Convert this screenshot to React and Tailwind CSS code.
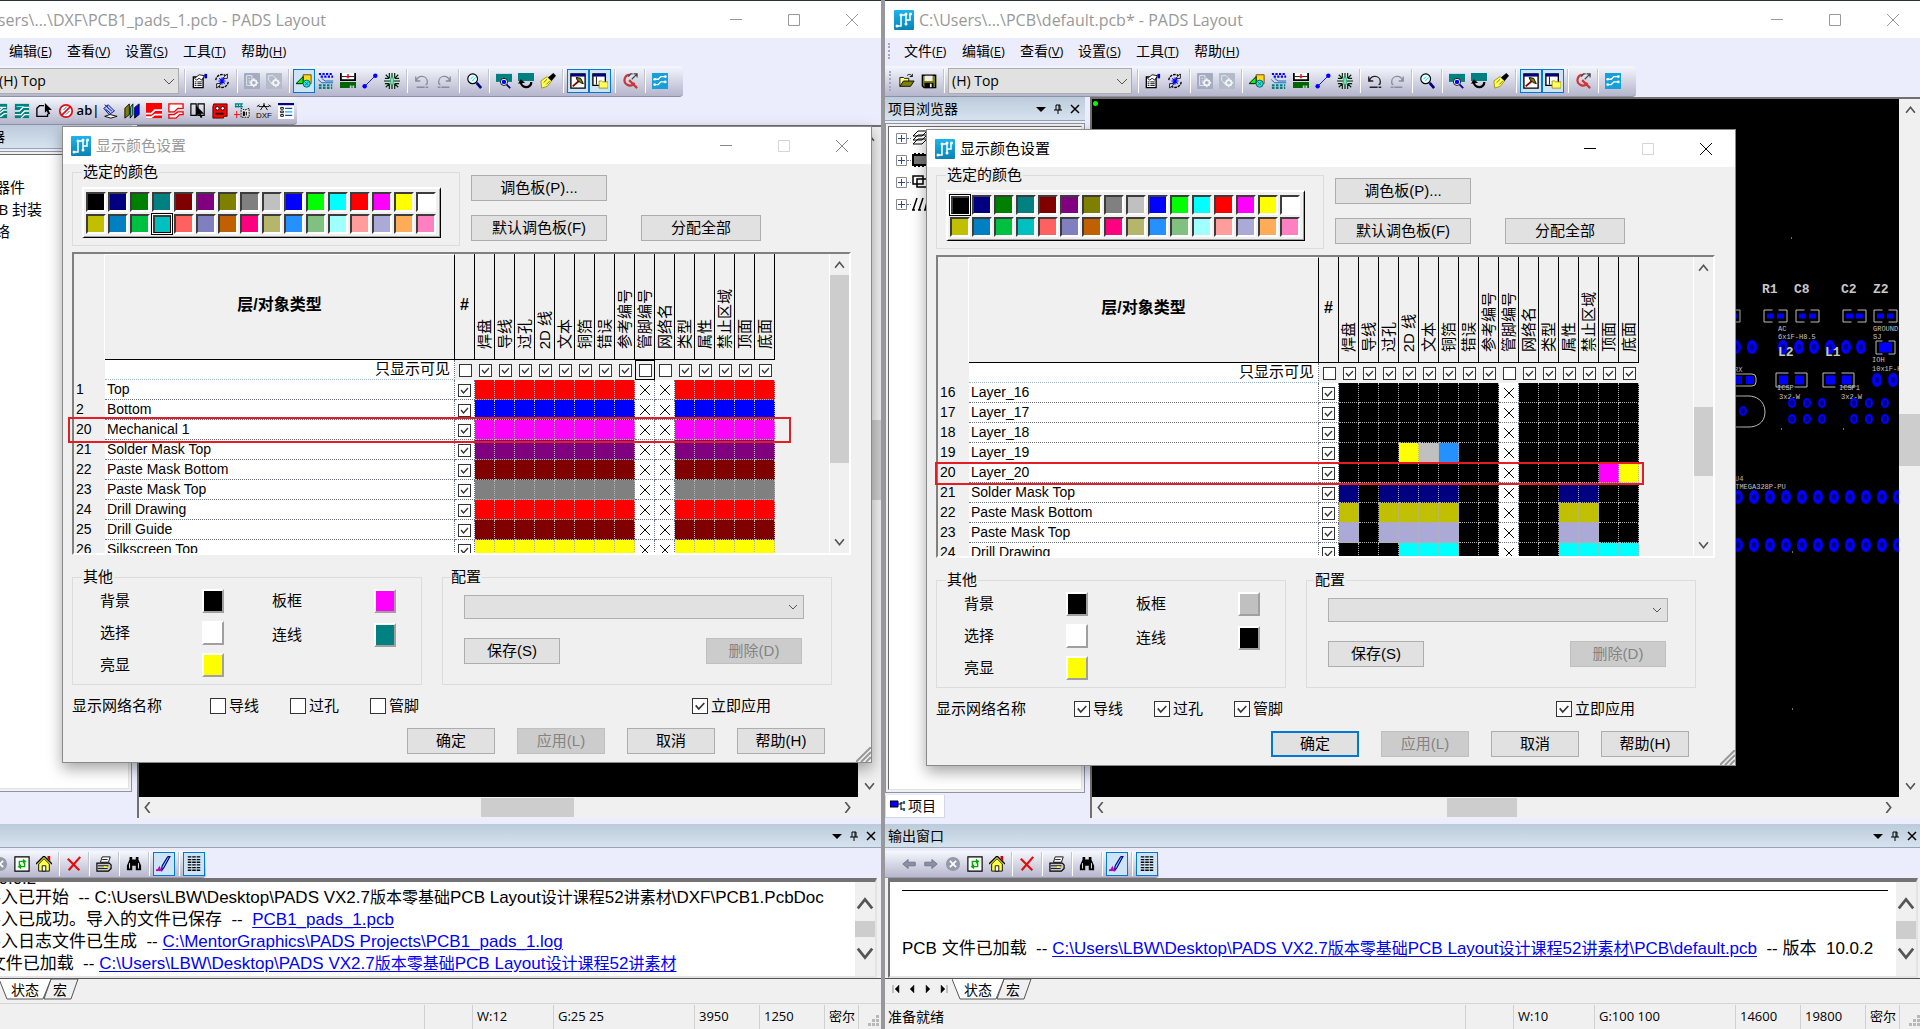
import { Fragment } from 'react'
import clsx from 'clsx'

const PALETTE = [
  ['#000000', '#000080', '#008000', '#008080', '#800000', '#800080', '#808000', '#808080', '#c0c0c0', '#0000ff', '#00ff00', '#00ffff', '#ff0000', '#ff00ff', '#ffff00', '#ffffff'],
  ['#c0c000', '#0080c0', '#00c040', '#00c0c0', '#ff6060', '#8080c0', '#c06000', '#ff0080', '#b5b56b', '#2590ff', '#80c080', '#a0ffff', '#ff9c9c', '#aba9d5', '#ffac59', '#ff80c0'],
]

const COLUMNS = ['焊盘', '导线', '过孔', '2D 线', '文本', '铜箔', '错误', '参考编号', '管脚编号', '网络名', '类型', '属性', '禁止区域', '顶面', '底面']

// one letter per object column, x = no colour for that object
const COLORS = {
  k: '#000000',
  r: '#ff0000',
  b: '#0000ff',
  m: '#ff00ff',
  p: '#800080',
  d: '#800000',
  g: '#808080',
  y: '#ffff00',
  s: '#c0c0c0',
  l: '#2590ff',
  n: '#000080',
  o: '#c0c000',
  v: '#aba9d5',
  c: '#00ffff',
}

const LEFT_ROWS = [
  ['1', 'Top', 'rrrrrrrrxxrrrrr'],
  ['2', 'Bottom', 'bbbbbbbbxxbbbbb'],
  ['20', 'Mechanical 1', 'mmmmmmmmxxmmmmm'],
  ['21', 'Solder Mask Top', 'ppppppppxxppppp'],
  ['22', 'Paste Mask Bottom', 'ddddddddxxddddd'],
  ['23', 'Paste Mask Top', 'ggggggggxxggggg'],
  ['24', 'Drill Drawing', 'rrrrrrrrxxrrrrr'],
  ['25', 'Drill Guide', 'ddddddddxxddddd'],
  ['26', 'Silkscreen Top', 'yyyyyyyyxxyyyyy'],
]

const RIGHT_ROWS = [
  ['16', 'Layer_16', 'kkkkkkkkxkkkkkk'],
  ['17', 'Layer_17', 'kkkkkkkkxkkkkkk'],
  ['18', 'Layer_18', 'kkkkkkkkxkkkkkk'],
  ['19', 'Layer_19', 'kkkyslkkxkkkkkk'],
  ['20', 'Layer_20', 'kkkkkkkkxkkkkmy'],
  ['21', 'Solder Mask Top', 'nknnnnkkxkknnkk'],
  ['22', 'Paste Mask Bottom', 'okooookkxkkookk'],
  ['23', 'Paste Mask Top', 'vkvvvvkkxkkvvkk'],
  ['24', 'Drill Drawing', 'kkkccckkxkkcccc'],
]

const ICONS = {
  open: (
    <>
      <path d="M1 15V5h4l1 1h5v3" fill="#ffff80" stroke="#000" />
      <path d="M1 15L5 9h12l-4 6z" fill="#808000" stroke="#000" />
      <path d="M9 3c2-2 4-2 6 1M15 1v3h-3" fill="none" stroke="#000" />
    </>
  ),
  save: (
    <>
      <path d="M1.500 2.500h15v14h-13l-2-2z" fill="#808000" stroke="#000" strokeWidth="1.500" />
      <rect x="4" y="3" width="9" height="6" fill="#eee" />
      <rect x="4" y="11" width="10" height="6" fill="#000" />
      <rect x="10" y="12" width="2" height="4" fill="#eee" />
    </>
  ),
  props: (
    <>
      <path d="M1.500 4.500h11v12h-11z" fill="#fff" stroke="#000" strokeWidth="1.500" />
      <path d="M3 10h2M6 10h5M3 12h2M6 12h5M3 14h2M6 14h5" stroke="#000" />
      <path d="M3 6l5-4 6 1-3 5-3-2-3 2z" fill="#fff" stroke="#000" />
      <path d="M14 1h3v5h-3z" fill="#0000c0" />
    </>
  ),
  cycle: (
    <>
      <path d="M2 8a7 7 0 0 1 11-5M16 10a7 7 0 0 1-11 5" fill="none" stroke="#000" strokeWidth="1.500" strokeDasharray="3 1" />
      <path d="M15 1v5h-5zM3 17v-5h5z" fill="#fff" stroke="#000" />
      <path d="M9 5v8M5 9h8M6 6l6 6M12 6l-6 6" stroke="#00f" strokeWidth="1.300" />
    </>
  ),
  gearDoc: (
    <>
      <rect x="0" y="0" width="18" height="18" rx="1" fill="#a4adc0" />
      <path d="M3 3h6v11H3zM5 6h2M5 9h2" fill="none" stroke="#e8ecf4" />
      <path d="M11 6v10M6 11h10M8 8l6 6M14 8l-6 6" stroke="#f2f4fa" strokeWidth="1.500" />
      <circle cx="11" cy="11" r="3" fill="none" stroke="#f2f4fa" strokeWidth="2" />
      <circle cx="11" cy="11" r="2" fill="#a4adc0" />
    </>
  ),
  gearTag: (
    <>
      <rect x="0" y="0" width="18" height="18" rx="1" fill="#b3bac8" />
      <path d="M3 3h5l3 3-4 7-4-5z" fill="none" stroke="#e8ecf4" />
      <path d="M11 6v10M6 11h10M8 8l6 6M14 8l-6 6" stroke="#f2f4fa" strokeWidth="1.500" />
      <circle cx="11" cy="11" r="3" fill="none" stroke="#f2f4fa" strokeWidth="2" />
      <circle cx="11" cy="11" r="2" fill="#b3bac8" />
    </>
  ),
  shapes: (
    <>
      <path d="M8 2h9v10H8z" fill="#ffd820" stroke="#604000" />
      <path d="M0 12l8-8v8z" fill="#0f0" stroke="#000" />
      <circle cx="12" cy="12" r="4" fill="#2ce0e0" stroke="#006060" />
      <path d="M10 10l4 4M14 10l-4 4" stroke="#008080" />
    </>
  ),
  dots: (
    <>
      <path d="M1 1h16M3 4h14" stroke="#00f" strokeWidth="2.500" strokeDasharray="2.500 1.500" />
      <path d="M0 7l4 4h13M4 6l4 3h9" fill="none" stroke="#0060c0" />
      <path d="M1 14h15M1 17h15" stroke="#008080" strokeWidth="2.500" strokeDasharray="3 1.500" />
    </>
  ),
  ruler: (
    <>
      <path d="M1 0v8h16V0" fill="#fff" stroke="#000" strokeWidth="2" />
      <path d="M2 4h14" stroke="#000" />
      <path d="M9 1v5M7 4h4" stroke="#d00" strokeWidth="1.500" />
      <path d="M0 10h18v7h-2v-3h-2v3h-1v-3h-2v3H0z" fill="#006400" />
    </>
  ),
  route: (
    <>
      <path d="M3 15L15 3" stroke="#00f" />
      <circle cx="3" cy="15" r="2.500" fill="#00f" />
      <circle cx="15" cy="3" r="2.500" fill="#00f" />
    </>
  ),
  burst: (
    <>
      <path d="M9 0v18M6 0v6M12 0v6M6 12v6M12 12v6M0 9h18M1 6h5M1 12h5M12 6h5M12 12h5M2 2l4 4M16 2l-4 4M2 16l4-4M16 16l-4-4" stroke="#002800" strokeWidth="1.300" />
      <rect x="7" y="5" width="4" height="8" fill="#20c080" />
      <path d="M9 6v6" stroke="#fff" />
    </>
  ),
  undo: <path d="M3 9c0-7 12-7 12 1 0 2-1 3-2 3M2 4v5h5M3 16h9M13 16h3" fill="none" stroke="#888d99" strokeWidth="1.500" />,
  undoOn: <path d="M3 9c0-7 12-7 12 1 0 2-1 3-2 3M2 4v5h5M3 16h9M13 16h3" fill="none" stroke="#222" strokeWidth="1.500" />,
  redo: <path d="M15 9c0-7-12-7-12 1 0 2 1 3 2 3M16 4v5h-5M2 16h3M6 16h9" fill="none" stroke="#888d99" strokeWidth="1.500" />,
  zoom: (
    <>
      <circle cx="7.500" cy="6.500" r="5.500" fill="#e8ffff" stroke="#000" strokeWidth="1.300" />
      <path d="M5 7l3-3M7 9l4-4" stroke="#00c8e0" />
      <path d="M12 11l5 6" stroke="#000080" strokeWidth="3" />
    </>
  ),
  boardZoom: (
    <>
      <path d="M0 1h18v9H0z" fill="#008080" />
      <circle cx="9" cy="10" r="4" fill="#fff" stroke="#000" />
      <circle cx="9" cy="10" r="2.500" fill="#00f" />
      <path d="M12 13l4 4" stroke="#000080" strokeWidth="2" />
    </>
  ),
  boardRedraw: (
    <>
      <path d="M0 0h18v9H0z" fill="#008080" />
      <path d="M3 9c0 9 12 9 12 1" fill="none" stroke="#000" strokeWidth="2.500" />
      <path d="M0 12l3-5 5 4z" fill="#000" />
    </>
  ),
  brush: (
    <>
      <path d="M1 9l7-5 5 5-5 6-6 2z" fill="#ffff60" stroke="#a09000" />
      <path d="M9 5l6-5 3 3-5 6z" fill="#000" />
      <path d="M4 11l4-4M7 13l4-4" stroke="#806000" />
    </>
  ),
  hammer: (
    <>
      <path d="M1 1h16v16H1z" fill="#fff" stroke="#000" strokeWidth="1.500" />
      <path d="M1 1h16v3H1z" fill="#000080" />
      <path d="M3 15l7-6" stroke="#800000" strokeWidth="2" />
      <path d="M7 5l5 1 3 6-3-1-4-3z" fill="#808000" stroke="#000" />
    </>
  ),
  panes: (
    <>
      <path d="M1 1h14v13H1z" fill="#fff" stroke="#000" strokeWidth="1.500" />
      <path d="M1 1h14v3H1z" fill="#000080" />
      <path d="M5 4v9" stroke="#000" />
      <path d="M8 9h3l1 1h6v7H8z" fill="#ffff60" stroke="#a09000" />
    </>
  ),
  query: (
    <>
      <path d="M9 2a6 6 0 1 0 5 9M8 8l9 9" fill="none" stroke="#c8383c" strokeWidth="2.500" />
      <path d="M11 7l6-6M13 1h4v4M9 1h3M7 4l3-3" fill="none" stroke="#444" strokeWidth="1.300" />
    </>
  ),
  waves: (
    <>
      <rect x="0" y="0" width="18" height="18" fill="#159fdb" />
      <path d="M3 7h4l3-3h5M3 13h4l3-3h5" fill="none" stroke="#fff" strokeWidth="1.500" />
      <circle cx="3" cy="7" r="1.500" fill="#fff" />
      <circle cx="15" cy="4" r="1.500" fill="#fff" />
      <circle cx="3" cy="13" r="1.500" fill="#fff" />
      <circle cx="15" cy="10" r="1.500" fill="#fff" />
    </>
  ),
  copper: (
    <>
      <rect x="1" y="1" width="16" height="16" fill="#008080" />
      <path d="M1 5h15M3 8h6l3-3M1 11h8l4-3h4M1 15h9l4-3h3" fill="none" stroke="#fff" strokeWidth="1.500" />
    </>
  ),
  copper2: (
    <>
      <rect x="1" y="1" width="16" height="16" fill="#008080" />
      <path d="M1 9h5l4-4h7M1 13h7l4-4h5M8 17l4-4h5" fill="none" stroke="#fff" strokeWidth="1.500" />
      <path d="M3 4h8" stroke="#80ffff" />
    </>
  ),
  addShape: (
    <>
      <path d="M9 3H4L1 6v9h12v-3" fill="none" stroke="#000" strokeWidth="1.500" />
      <path d="M10 0l8 8h-4l2 4-2 1-2-4-2 2z" fill="#000" />
    </>
  ),
  keepout: (
    <>
      <circle cx="9" cy="9" r="7" fill="#fff" stroke="#e01010" strokeWidth="2" />
      <path d="M4 14L14 4" stroke="#e01010" strokeWidth="2" />
      <path d="M6 8l4-4M9 13l4-4" stroke="#24c" />
    </>
  ),
  pour: (
    <>
      <path d="M2 6l5-4 7 7-6 4z" fill="#b0c8ff" stroke="#000080" />
      <path d="M4 7l5 4M6 5l5 4M3 2l4 3" stroke="#000080" />
      <path d="M3 15l6-2 8 2-7 2z" fill="#fff" stroke="#000" />
    </>
  ),
  books: (
    <>
      <path d="M1 6l5-5v12l-5 4z" fill="#808000" stroke="#000" />
      <path d="M7 5l3-4v12l-3 4z" fill="#20d0d0" stroke="#000" />
      <path d="M12 5l5-4v12l-5 4z" fill="#00f" stroke="#000" />
    </>
  ),
  plane: (
    <>
      <rect x="0" y="0" width="18" height="17" fill="#f00" />
      <path d="M0 12h6l4-4h8M0 16h6l4-3h8" fill="none" stroke="#fff" strokeWidth="2" />
    </>
  ),
  planeCut: (
    <>
      <path d="M1 1h16v5h-6l-4 4H1zM1 17v-4h6l4-3h6v3h-4l-4 4z" fill="#fff" stroke="#f00" strokeWidth="1.500" />
    </>
  ),
  select: (
    <>
      <path d="M1 1h6v13H1zM9 1h7v13H9z" fill="none" stroke="#000" strokeWidth="1.300" />
      <path d="M7 3v12l3-3 2 5 2-1-2-4h4z" fill="#000" />
    </>
  ),
  redPart: (
    <>
      <path d="M2 1h15v14h-4v2H1V4z" fill="#f00" stroke="#400" />
      <circle cx="6" cy="6" r="2" fill="#fff" stroke="#000" />
      <circle cx="12" cy="6" r="2" fill="#fff" stroke="#000" />
      <path d="M4 12h9" stroke="#000" strokeWidth="2" />
    </>
  ),
  clipPart: (
    <>
      <path d="M1 1h9M1 4h9M2 1v4M5 1v4M8 1v4" stroke="#008080" strokeWidth="1.500" />
      <path d="M0 13h7M3 9v8" stroke="#f00" />
      <path d="M8 16V6l4 2 5-2v10z" fill="#e8e8e8" stroke="#000" strokeDasharray="2 1" />
      <path d="M10 10h2v4h-2M14 10v4" stroke="#000" />
    </>
  ),
  dxf: (
    <>
      <path d="M9 0v3M3 4h12M5 8l4-6 4 6M1 4l3-2M17 4l-3-2" fill="none" stroke="#000" />
      <text x="9" y="17" textAnchor="middle" fontSize="9" fontFamily="Liberation Sans">DXF</text>
    </>
  ),
  list: (
    <>
      <rect x="0" y="0" width="18" height="18" fill="#fff" />
      <path d="M0 1h18" stroke="#000080" strokeWidth="3" />
      <path d="M3 5h3v2H3zM3 9h3v2H3zM3 13h3v2H3z" fill="none" stroke="#000" />
      <path d="M8 6h8M8 14h8" stroke="#24c" strokeWidth="1.500" />
      <path d="M8 10h8" stroke="#0cc" strokeWidth="1.500" />
    </>
  ),
  back: <path d="M2 9l6-5v3h8v4H8v3z" fill="#8b90a2" stroke="#6f7488" />,
  forward: <path d="M16 9l-6-5v3H2v4h8v3z" fill="#8b90a2" stroke="#6f7488" />,
  stop: (
    <>
      <circle cx="9" cy="9" r="8" fill="#959aa8" />
      <path d="M5.500 5.500l7 7M12.500 5.500l-7 7" stroke="#fff" strokeWidth="2" />
    </>
  ),
  reload: (
    <>
      <path d="M1 1h16v16H1z" fill="#fff" stroke="#000" strokeWidth="1.300" />
      <path d="M6 11V6h5M12 7v5H7" fill="none" stroke="#00b000" strokeWidth="1.500" />
      <path d="M10 3l4 3-4 3zM8 9l-4 3 4 3z" fill="#00b000" />
    </>
  ),
  home: (
    <>
      <path d="M0 9l9-9 9 9" fill="#ffff40" stroke="#000" strokeWidth="1.500" />
      <path d="M3 9v8h12V9L9 3z" fill="#ffff40" stroke="#000" />
      <path d="M13 0h3v6l-3-3z" fill="#c00" />
      <path d="M7 17v-6h4v6z" fill="#fff" stroke="#000" />
    </>
  ),
  cross: <path d="M2 3l13 13M16 1L3 16" stroke="#e01010" strokeWidth="2.500" />,
  print: (
    <>
      <path d="M5 7l2-6h9l-2 6z" fill="#fff" stroke="#000" />
      <path d="M1 8h14l2 2v4l-3 3H1z" fill="#c8c8c8" stroke="#000" strokeWidth="1.300" />
      <path d="M7 4h6M2 11h12M2 14h11" stroke="#000" />
      <path d="M9 12.500h3" stroke="#ff0" strokeWidth="2" />
    </>
  ),
  find: (
    <>
      <path d="M4 1h3v3h4V1h3v3l3 7v5h-6v-5H7v5H1v-5l3-7z" fill="#000" />
      <path d="M4 8v6M14 8v6" stroke="#fff" />
    </>
  ),
  pen: (
    <>
      <path d="M16 0L9 13l-3 4 1-6 6-10z" fill="#7ac8ff" stroke="#000080" strokeWidth="1.300" />
      <path d="M1 16l3-5 2 5z" fill="#c000c0" />
      <path d="M0 16h7" stroke="#c000c0" strokeWidth="2" />
    </>
  ),
  grid: <path d="M2 1h14M2 4h14M2 7h14M2 10h14M2 13h14M2 16h14" stroke="#000" strokeWidth="1.500" strokeDasharray="4 1" />,
}

const MAIN_TOOLS = ['props', 'cycle', '|', 'gearDoc', 'gearTag', '|', 'shapes*', 'dots', 'ruler', 'route', 'burst', '|', 'undo', 'redo', '|', 'zoom', '|', 'boardZoom', 'boardRedraw', 'brush', '|', 'hammer*', 'panes*', '|', 'query', '|', 'waves']
const RIGHT_TOOLS = MAIN_TOOLS.map((t) => (t === 'shapes*' ? 'shapes' : t === 'undo' ? 'undoOn' : t))
const DRAFT_TOOLS = ['copper', 'copper2', 'addShape', 'keepout', 'ab', 'pour', 'books', 'plane', 'planeCut', 'select', 'redPart', 'clipPart', 'dxf', 'list']
const OUTPUT_TOOLS = ['back', 'forward', 'stop', 'reload', 'home', '|', 'cross', '|', 'print', '|', 'find', '|', 'pen*', '|', 'grid*']

function Tools({ names }) {
  return names.map((name, i) => {
    if (name === '|') {
      return <span key={i} className="mx-[3px] h-6 w-[2px] border-l border-[#c3c4d0] bg-white" />
    }
    const active = name.endsWith('*')
    const key = active ? name.slice(0, -1) : name
    return (
      <button
        key={i}
        aria-label={key}
        className={clsx(
          'flex h-6 w-[22px] shrink-0 items-center justify-center border',
          active ? 'border-[#0078d7] bg-[#cde4f7]' : 'border-transparent'
        )}
      >
        {key === 'ab' ? (
          <span className="text-[13px] font-semibold">ab|</span>
        ) : (
          <svg viewBox="0 0 18 18" className="size-4 shrink-0">{ICONS[key]}</svg>
        )}
      </button>
    )
  })
}

function Logo() {
  return (
    <svg viewBox="0 0 20 20" className="size-5 shrink-0">
      <defs>
        <linearGradient id="logo" x1="0" y1="0" x2="0" y2="1">
          <stop offset="0" stopColor="#1bb5ee" />
          <stop offset="1" stopColor="#0b81b3" />
        </linearGradient>
      </defs>
      <rect width="20" height="20" rx="1" fill="url(#logo)" />
      <path d="M3 16h4V5h4M12 14V4M12 10h4V5" fill="none" stroke="#fff" strokeWidth="1.500" />
      <circle cx="3" cy="16" r="1.500" fill="#fff" />
      <circle cx="12" cy="14" r="1.500" fill="#fff" />
      <circle cx="12" cy="4" r="1.500" fill="#fff" />
      <circle cx="16.500" cy="4" r="1.500" fill="#fff" />
      <circle cx="7" cy="5" r="1.500" fill="#fff" />
    </svg>
  )
}

function WindowButtons({ color, maxColor }) {
  return (
    <div className={clsx('ml-auto flex', color)}>
      <button aria-label="最小化" className="flex w-[58px] justify-center">
        <svg viewBox="0 0 12 12" className="size-3"><path d="M0 5.500h12" stroke="currentColor" /></svg>
      </button>
      <button aria-label="最大化" className={clsx('flex w-[58px] justify-center', maxColor)}>
        <svg viewBox="0 0 12 12" className="size-3"><path d="M.5.5h11v11H.5z" fill="none" stroke="currentColor" /></svg>
      </button>
      <button aria-label="关闭" className="flex w-[58px] justify-center">
        <svg viewBox="0 0 12 12" className="size-3"><path d="M0 0l12 12M12 0L0 12" stroke="currentColor" /></svg>
      </button>
    </div>
  )
}

function PanelHeader({ title }) {
  return (
    <div className="flex h-6 shrink-0 items-center border-b border-[#9aa3b0] bg-gradient-to-b from-[#bccbdb] to-[#d6e3ef] pl-[3px] text-sm">
      <span className="whitespace-nowrap">{title}</span>
      <span className="ml-auto flex items-center gap-[3px] pr-[3px]">
        <button aria-label="菜单" className="p-[2px]">
          <svg viewBox="0 0 10 10" className="size-[10px]"><path d="M0 3h10L5 8z" /></svg>
        </button>
        <button aria-label="固定" className="p-[2px]">
          <svg viewBox="0 0 10 10" className="size-[10px]"><path d="M3 6V1h4v5M6 1v5M1 6h8M5 6v4" fill="none" stroke="#000" /></svg>
        </button>
        <button aria-label="关闭面板" className="p-[2px]">
          <svg viewBox="0 0 10 10" className="size-[10px]"><path d="M1 1l8 8M9 1L1 9" stroke="#000" strokeWidth="1.500" /></svg>
        </button>
      </span>
    </div>
  )
}

function Arrow({ dir, big }) {
  const paths = { up: 'M1 8l4-5 4 5', down: 'M1 2l4 5 4-5', left: 'M7 0L3 5l4 5', right: 'M3 0l4 5-4 5' }
  return (
    <svg viewBox="0 0 10 10" className={clsx('shrink-0', big ? 'size-[18px]' : 'size-[11px]')}>
      <path d={paths[dir]} fill="none" stroke="#555" strokeWidth="1.500" />
    </svg>
  )
}

function VScroll({ className, thumb, before, after = 'grow', big }) {
  return (
    <div className={clsx('flex shrink-0 flex-col items-center bg-[#f0f0f0]', className)}>
      <span className="flex h-[21px] shrink-0 items-center"><Arrow dir="up" big={big} /></span>
      <span className={before} />
      <span className={clsx('w-full shrink-0 bg-[#cdcdcd]', thumb)} />
      <span className={after} />
      <span className="flex h-[21px] shrink-0 items-center"><Arrow dir="down" big={big} /></span>
    </div>
  )
}

function Check({ checked, big, label }) {
  const size = big ? 'size-4' : 'size-[13px]'
  return (
    <span className="inline-grid align-middle">
      <input
        type="checkbox"
        defaultChecked={checked}
        aria-label={label}
        className={clsx('peer col-start-1 row-start-1 appearance-none border border-[#333] bg-white', size)}
      />
      <svg viewBox="0 0 13 13" className={clsx('pointer-events-none col-start-1 row-start-1 hidden peer-checked:block', size)}>
        <path d="M3 6l2.500 3L10 4" fill="none" stroke="#333" strokeWidth="1.300" />
      </svg>
    </span>
  )
}

function Button({ children, className, disabled, primary }) {
  return (
    <button
      disabled={disabled}
      className={clsx(
        'h-[26px] pb-[2px] text-[15px] leading-none whitespace-nowrap',
        primary ? 'border-2 border-[#0078d7] bg-[#e1e1e1]' : 'border',
        disabled ? 'border-[#bfbfbf] bg-[#cccccc] text-[#838383]' : !primary && 'border-[#adadad] bg-[#e1e1e1]',
        className
      )}
    >
      {children}
    </button>
  )
}

function Swatches({ selected }) {
  return (
    <div className="grid w-[359px] grid-cols-[repeat(16,22px)] border-t-2 border-l-2 border-r border-b border-t-white border-l-white border-r-black border-b-black py-[2px] pl-[1px] shadow-[inset_-1px_-1px_0_#a0a0a0]">
      {PALETTE.map((row, r) => (
        <Fragment key={r}>
          {row.map((color, c) => {
            const on = selected === r * 16 + c
            return (
              <button
                key={color}
                aria-label={color}
                className={clsx('size-[22px]', on ? 'border border-black bg-white p-[1px]' : 'p-[1px]')}
              >
                <span
                  className={clsx(
                    'block size-full border-t-2 border-l-2 border-t-[#3c3c3c] border-l-[#3c3c3c]',
                    on ? 'border-r border-b border-r-black border-b-black' : 'border-r-2 border-b-2 border-r-white border-b-white'
                  )}
                  style={{ backgroundColor: color }}
                />
              </button>
            )
          })}
        </Fragment>
      ))}
    </div>
  )
}

function LayerTable({ rows, hidden, focused }) {
  return (
    <table className="w-[701px] shrink-0 table-fixed border-separate border-spacing-0 text-sm leading-none">
      <colgroup>
        <col className="w-[31px]" />
        <col className="w-[350px]" />
        {['#', ...COLUMNS].map((c) => <col key={c} className="w-5" />)}
      </colgroup>
      <thead>
        <tr className="h-[106px]">
          <th className="border-r border-white" />
          <th className="border-t border-r border-b border-t-white border-r-black border-b-black pb-1 text-[16px]">层/对象类型</th>
          <th className="border-r border-b border-black p-0 pb-1 text-[16px]">#</th>
          {COLUMNS.map((c) => (
            <th key={c} className="border-r border-b border-black p-0 pb-2 align-bottom font-normal">
              <span className="inline-block rotate-180 text-[15px] leading-[19px] whitespace-nowrap [text-orientation:sideways] [writing-mode:vertical-rl]">{c}</span>
            </th>
          ))}
        </tr>
      </thead>
      <tbody>
        <tr className="h-5">
          <td />
          <td className="border-r border-b border-dotted border-r-gray-500 border-b-[#9ab4cc] bg-white p-0 pr-1 pb-[2px] text-right text-[15px]">只显示可见</td>
          <td className="p-0 text-center"><Check label="#" /></td>
          {COLUMNS.map((c) => (
            <td key={c} className={clsx('p-0 text-center', focused === c && 'outline-1 -outline-offset-1 outline-black')}>
              <Check label={c} checked={!hidden.includes(c)} />
            </td>
          ))}
        </tr>
        {rows.map(([no, name, cells]) => (
          <tr key={no} className="h-5">
            <td className="p-0 pb-[3px] pl-[2px]">{no}</td>
            <td className="border-r border-b border-dotted border-gray-500 bg-white p-0 pb-[2px] pl-[2px]">{name}</td>
            <td className="border-r border-b border-dotted border-gray-500 bg-white p-0 text-center"><Check checked label={name} /></td>
            {cells.split('').map((k, i) =>
              k === 'x' ? (
                <td key={i} className="border-r border-b border-dotted border-gray-500 bg-white p-0">
                  <svg viewBox="0 0 12 12" className="mx-auto size-3"><path d="M1 1l10 10M11 1L1 11" stroke="#000" /></svg>
                </td>
              ) : (
                <td key={i} className="border-r border-b border-dotted border-[#b4b4b4] p-0" style={{ backgroundColor: COLORS[k] }} />
              )
            )}
          </tr>
        ))}
      </tbody>
    </table>
  )
}

function ColorWell({ label, color }) {
  return (
    <div className="flex items-center text-[15px]">
      <span>{label}</span>
      <button
        aria-label={label}
        className="ml-auto h-6 w-[22px] border-2 border-t-white border-r-[#a0a0a0] border-b-[#a0a0a0] border-l-white"
        style={{ backgroundColor: color }}
      />
    </div>
  )
}

function NetCheck({ label, checked }) {
  return (
    <label className="flex w-20 items-center gap-[3px] whitespace-nowrap">
      <Check big checked={checked} label={label} />
      {label}
    </label>
  )
}

function ColorDialog({ className, active, selected, rows, hidden, focused, others, netsShown, scroll, markClass }) {
  return (
    <section
      className={clsx(
        "absolute w-[810px] border border-[#8a8a8a] bg-[#f0f0f0] font-['Liberation_Sans','Noto_Sans_CJK_SC',sans-serif] text-black shadow-[0_6px_14px_rgba(0,0,0,0.35)]",
        className
      )}
    >
      <header className="flex h-[37px] items-center gap-[5px] bg-white pl-2">
        <Logo />
        <h2 className={clsx('text-[15px]', active ? 'text-black' : 'text-[#999]')}>显示颜色设置</h2>
        <WindowButtons color={active ? 'text-black' : 'text-[#888]'} maxColor="text-[#d5d5d5]" />
      </header>

      <div className="pr-5 pb-2 pl-[9px]">
        <div className="flex">
          <fieldset className="h-[82px] w-[388px] border border-[#dcdcdc] pt-[7px] pl-[9px]">
            <legend className="px-[1px] text-[15px] leading-4">选定的颜色</legend>
            <Swatches selected={selected} />
          </fieldset>
          <div className="ml-[11px] flex flex-col gap-[14px] pt-[11px]">
            <Button className="w-[136px]">调色板(P)...</Button>
            <div className="flex gap-[34px]">
              <Button className="w-[136px]">默认调色板(F)</Button>
              <Button className="w-[120px]">分配全部</Button>
            </div>
          </div>
        </div>

        <div className="mt-[6px] flex h-[303px] justify-between overflow-hidden border-2 border-t-[#808080] border-r-white border-b-white border-l-[#808080]">
          <LayerTable rows={rows} hidden={hidden} focused={focused} />
          <VScroll className="w-5 border-l border-white" {...scroll} />
        </div>
        <div className={clsx('pointer-events-none absolute border-2 border-[#e51c23]', markClass)} />

        <div className="mt-[14px] flex gap-5">
          <fieldset className="h-[116px] w-[350px] border border-[#dcdcdc] pr-[25px] pl-[27px]">
            <legend className="-ml-[18px] px-[1px] text-[15px] leading-4">其他</legend>
            <div className="mt-1 flex justify-between">
              <div className="flex w-[124px] flex-col gap-2">
                <ColorWell label="背景" color={others[0]} />
                <ColorWell label="选择" color={others[1]} />
                <ColorWell label="亮显" color={others[2]} />
              </div>
              <div className="flex w-[124px] flex-col gap-[10px]">
                <ColorWell label="板框" color={others[3]} />
                <ColorWell label="连线" color={others[4]} />
              </div>
            </div>
          </fieldset>
          <fieldset className="h-[116px] w-[390px] border border-[#dcdcdc] pr-[27px] pl-[21px]">
            <legend className="-ml-[14px] px-[1px] text-[15px] leading-4">配置</legend>
            <div className="mt-[10px] grid">
              <select aria-label="配置" className="col-start-1 row-start-1 h-6 appearance-none border border-[#b0b0b0] bg-[#e1e1e1]">
                <option />
              </select>
              <svg viewBox="0 0 10 10" className="pointer-events-none col-start-1 row-start-1 mr-[6px] size-[10px] self-center justify-self-end">
                <path d="M1 3l4 4 4-4" fill="none" stroke="#555" />
              </svg>
            </div>
            <div className="mt-[19px] flex justify-between pr-[2px]">
              <Button className="w-24">保存(S)</Button>
              <Button className="w-24" disabled>删除(D)</Button>
            </div>
          </fieldset>
        </div>

        <div className="mt-[9px] flex h-6 items-center text-[15px]">
          <span className="w-[138px]">显示网络名称</span>
          <NetCheck label="导线" checked={netsShown} />
          <NetCheck label="过孔" checked={netsShown} />
          <NetCheck label="管脚" checked={netsShown} />
          <label className="mr-20 ml-auto flex items-center gap-[3px]">
            <Check big checked label="立即应用" />
            立即应用
          </label>
        </div>

        <div className="mt-[10px] flex justify-end gap-[22px] pr-[26px]">
          <Button className="w-[88px]" primary={active}>确定</Button>
          <Button className="w-[88px]" disabled>应用(L)</Button>
          <Button className="w-[88px]">取消</Button>
          <Button className="w-[88px]">帮助(H)</Button>
        </div>
      </div>
      <svg viewBox="0 0 15 15" className="absolute right-0 bottom-0 size-[15px]">
        <path d="M0 15L15 0M5 15L15 5M10 15l5-5" stroke="#999" strokeWidth="2" />
      </svg>
    </section>
  )
}

function Via({ x, y, small }) {
  return (
    <g>
      <ellipse cx={x} cy={y} rx={small ? 4 : 5} ry={small ? 5 : 7} fill="#0000ff" />
      <ellipse cx={x} cy={y} rx="2" ry="3" fill="#000080" />
    </g>
  )
}

function TwoPad({ x, y, w = 23, h = 12, pw = 7, ph = 5 }) {
  return (
    <g>
      <path d={`M${x + w / 2 - 3} ${y}H${x}v${h}h${w / 2 - 3}M${x + w / 2 + 3} ${y}H${x + w}v${h}h${3 - w / 2}`} fill="none" stroke="#bbb" />
      <rect x={x + 3} y={y + (h - ph) / 2} width={pw} height={ph} fill="#00f" />
      <rect x={x + w - 3 - pw} y={y + (h - ph) / 2} width={pw} height={ph} fill="#00f" />
    </g>
  )
}

// right hand part of the board, the rest lies under the dialog
function Board() {
  const row = Array.from({ length: 11 }, (_, i) => 3 + i * 16)
  return (
    <svg width="164" height="698" viewBox="0 0 164 698" className="ml-auto shrink-0 font-['Liberation_Mono',monospace]">
      <g fill="#c8c8c8" fontSize="13" fontWeight="bold">
        <text x="27" y="194">R1</text>
        <text x="59" y="194">C8</text>
        <text x="106" y="194">C2</text>
        <text x="138" y="194">Z2</text>
      </g>
      {[-18, 29, 61, 108, 139].map((x) => <TwoPad key={x} x={x} y={211} />)}
      {[1, 17, 48, 64, 79, 95, 111, 126].map((x) => <Via key={x} x={x} y={248} />)}
      <TwoPad x={141} y={242} w={19} h={13} pw={7} ph={10} />
      <g fill="#c8c8c8" fontSize="13" fontWeight="bold">
        <text x="43" y="257">L2</text>
        <text x="90" y="257">L1</text>
      </g>
      <g fill="#c4c4c4" fontSize="7">
        <text x="43" y="232">AC</text>
        <text x="43" y="240">6x1F-H8.5</text>
        <text x="138" y="232">GROUND</text>
        <text x="138" y="240">SJ</text>
        <text x="137" y="263">IOH</text>
        <text x="137" y="272">10x1F-H</text>
        <text x="-1" y="273">RX</text>
        <text x="42" y="291">ICSP</text>
        <text x="44" y="300">3x2-W</text>
        <text x="104" y="291">ICSP1</text>
        <text x="106" y="300">3x2-W</text>
        <text x="0" y="382">U4</text>
        <text x="-4" y="390">ATMEGA328P-PU</text>
      </g>
      <rect x="-20" y="275" width="41" height="12" rx="4" fill="none" stroke="#bbb" />
      <path d="M1 277h6v8H1zM11 277h8v8h-8z" fill="#00f" />
      <TwoPad x={41} y={274} w={31} h={14} pw={9} ph={9} />
      <TwoPad x={88} y={274} w={31} h={14} pw={9} ph={9} />
      <Via x={142} y={281} />
      <Via x={158} y={281} />
      <path d="M0 297h14c6 0 16 4 16 16s-10 15-16 15H0" fill="none" stroke="#bbb" />
      <Via x={8} y={312} small />
      {[304, 320].map((y) => [57, 72, 87, 119, 134, 150].map((x) => <Via key={`${x}-${y}`} x={x} y={y} small />))}
      {row.map((x) => <Via key={x} x={x} y={398} />)}
      {row.map((x) => <Via key={x} x={x} y={446} />)}
      <path d="M56 139h1M46 330h1M108 330h1M57 453h1M57 610h1" stroke="#ddd" />
    </svg>
  )
}

const TREE_ICONS = [
  <path key="l" d="M2 6l5-5h9l-5 5zM2 10l5-5h9l-5 5zM2 14l5-5h9l-5 5z" fill="#fff" stroke="#000" />,
  <path key="c" d="M2 3h14v10H2zM4 1v2M8 1v2M12 1v2M4 13v2M8 13v2M12 13v2" fill="#777" stroke="#000" strokeWidth="2" />,
  <path key="p" d="M2 2h10v8H2zM6 5h11v8H6z" fill="#fff" stroke="#000" strokeWidth="1.500" />,
  <path key="n" d="M2 14L6 2M8 14l4-12M14 14l3-12M1 14h3M7 14h3M13 14h3" fill="none" stroke="#000" strokeWidth="1.500" />,
]

function ProjectPanel({ withTab }) {
  return (
    <aside className="flex w-[200px] shrink-0 flex-col">
      <PanelHeader title="项目浏览器" />
      <div className={clsx('mt-[2px] flex grow border border-[#8e94a4] bg-[#f0f0f0] p-[2px]', withTab ? 'mb-[2px]' : 'mb-[26px]')}>
        <ul className="grow border border-t-[#696969] border-r-[#e3e3e3] border-b-[#e3e3e3] border-l-[#696969] bg-white pl-[7px] text-[15px]">
          {['层', '元器件', 'PCB 封装', '网络'].map((name, i) => (
            <li key={name} className="flex h-[22px] items-center whitespace-nowrap">
              <svg viewBox="0 0 11 11" className="size-[11px]">
                <path d="M.5.5h10v10H.5z" fill="#fff" stroke="#8a8a8a" />
                <path d="M2 5.500h7M5.500 2v7" stroke="#2a4a9a" />
              </svg>
              <span className="w-1 border-t border-dotted border-gray-500" />
              <svg viewBox="0 0 18 16" className="mr-1 h-4 w-[18px]">{TREE_ICONS[i]}</svg>
              {name}
            </li>
          ))}
        </ul>
      </div>
      {withTab && (
        <button className="flex h-[23px] w-[60px] items-center gap-[2px] border border-t-0 border-[#d4d6e4] bg-white pl-1 text-sm whitespace-nowrap">
          <svg viewBox="0 0 16 12" className="h-3 w-4">
            <path d="M0 1h8v6H0z" fill="#00f" stroke="#000" />
            <path d="M8 4h3M11 2v8M11 3h3M11 9h3" stroke="#000" />
            <path d="M13 1h2v3h-2zM13 8h2v3h-2z" fill="#008080" />
          </svg>
          项目
        </button>
      )}
    </aside>
  )
}

// paths set Chinese one size down from latin
function Path({ children }) {
  return children.split(/([\u4e00-\u9fff]+)/).map((part, i) =>
    i % 2 ? <span key={i} className="text-[16px]">{part}</span> : part
  )
}

function LogLink({ children }) {
  return (
    <a href="#log" className="text-[#0000ff] underline underline-offset-2"><Path>{children}</Path></a>
  )
}

function Output({ title, log, status, thumb }) {
  const [ready, ...cells] = status
  const widths = ['w-12', 'w-[81px]', 'w-[141px]', 'w-[65px]', 'w-[65px]', 'w-[34px]']
  return (
    <div className="flex h-[205px] shrink-0 flex-col bg-[#f0f0f0]">
      <PanelHeader title={title} />
      <div className="flex h-[30px] shrink-0 bg-[#ebedfc] pt-[3px]">
        <div className="flex items-center rounded-r-sm border-b border-[#9a9ab4] bg-gradient-to-b from-[#f6f8fe] to-[#b7b7cd] pl-[13px] pr-px">
          <Tools names={OUTPUT_TOOLS} />
        </div>
      </div>
      <div className="mr-[4px] ml-[3px] flex h-[100px] shrink-0 border-2 border-t-4 border-t-[#737373] border-r-[#e3e3e3] border-b-[#e3e3e3] border-l-[#737373] bg-white font-['Liberation_Sans','Noto_Sans_CJK_SC',sans-serif] text-[17px]">
        <div className="grow overflow-hidden pr-2 pl-3 leading-[22px] whitespace-pre">{log}</div>
        <VScroll className="w-5 pt-[10px] pb-3" before="h-2" thumb={thumb} big />
      </div>
      <div className="flex h-[25px] shrink-0 items-start border-t border-[#555] pl-[3px] text-sm">
        {['M2 0v8M8 0L4 4l4 4z', 'M7 0L3 4l4 4z', 'M3 0l4 4-4 4z', 'M8 0v8M2 0l4 4-4 4z'].map((d) => (
          <button key={d} aria-label="滚动标签" className="flex h-5 w-4 items-center justify-center">
            <svg viewBox="0 0 10 8" className="h-2 w-[10px]"><path d={d} stroke="#333" strokeWidth="0.500" /></svg>
          </button>
        ))}
        <div className="grid">
          <svg viewBox="0 0 80 21" className="col-start-1 row-start-1 h-[21px] w-20">
            <path d="M45 20L52 0h27l-7 20H50z" fill="#f0f0f0" stroke="#555" />
            <path d="M0 0l8 20h36l8-20" fill="#fff" stroke="#555" />
          </svg>
          <div className="col-start-1 row-start-1 flex pl-3">
            <button className="w-[42px] text-left leading-5">状态</button>
            <button className="leading-5">宏</button>
          </div>
        </div>
      </div>
      <footer className="flex grow items-center border-t border-[#d5d5d5] pl-[3px] text-[13px]">
        <span className="grow text-sm">{ready}</span>
        {cells.map((text, i) => (
          <span key={i} className={clsx('flex h-6 shrink-0 items-center border-l border-[#d0d0d0] pl-[4px] whitespace-nowrap', widths[i])}>
            {text}
          </span>
        ))}
        <span className="flex h-6 w-[23px] items-end justify-end border-l border-[#d0d0d0] p-[2px]">
          <svg viewBox="0 0 12 12" className="size-3">
            <path d="M9 0h3v3H9zM5 4h3v3H5zM9 4h3v3H9zM1 8h3v3H1zM5 8h3v3H5zM9 8h3v3H9z" fill="#b8b8b8" />
          </svg>
        </span>
      </footer>
    </div>
  )
}

function AppWindow({ className, title, tools, drafting, board, hThumb, hBefore, hAfter, vThumb, vBefore, output }) {
  return (
    <main className={clsx('flex h-full flex-col bg-[#ebedfc]', className)}>
      <header className="flex h-[38px] shrink-0 items-center gap-[5px] border-t border-[#2a3038] bg-white pl-[9px] text-[#999]">
        <Logo />
        <h1 className="text-[16px] leading-none whitespace-nowrap">{title}</h1>
        <WindowButtons />
      </header>
      <nav className="flex h-7 shrink-0 items-center gap-[14px] pb-[2px] pl-[3px] text-sm">
        <span className="h-4 border-l-2 border-dotted border-[#a5a6b8]" />
        {[['文件', 'F'], ['编辑', 'E'], ['查看', 'V'], ['设置', 'S'], ['工具', 'T'], ['帮助', 'H']].map(([name, key]) => (
          <button key={key} className="w-11 text-left whitespace-nowrap">
            {name}<span className="text-[13px]">(<u>{key}</u>)</span>
          </button>
        ))}
      </nav>
      <div className="flex h-[31px] shrink-0">
        <div className="flex items-center rounded-r border-b border-[#8f8fa8] bg-gradient-to-b from-[#f5f7fe] to-[#b5b5cc] pr-3 pb-px pl-1">
          <span className="mr-[5px] h-5 border-l-2 border-dotted border-[#a5a6b8]" />
          <Tools names={['open', 'save', '|']} />
          <div className="mr-[2px] grid w-[184px]">
            <select aria-label="层" className="col-start-1 row-start-1 h-[26px] appearance-none border border-[#adadad] bg-[#e1e1e1] pl-[3px] text-sm">
              <option>(H) Top</option>
            </select>
            <svg viewBox="0 0 10 10" className="pointer-events-none col-start-1 row-start-1 mr-[5px] size-[10px] self-center justify-self-end">
              <path d="M0 3l5 5 5-5" fill="none" stroke="#555" />
            </svg>
          </div>
          <Tools names={['|', ...tools]} />
        </div>
      </div>
      {drafting && (
        <div className="flex h-7 shrink-0">
          <div className="flex items-center rounded-r border-b border-[#8f8fa8] bg-gradient-to-b from-[#f5f7fe] to-[#b5b5cc] pl-[57px]">
            <Tools names={DRAFT_TOOLS} />
          </div>
        </div>
      )}
      <div className="flex min-h-0 grow gap-[5px] pb-[6px]">
        <ProjectPanel withTab={board} />
        <div className="flex grow flex-col border-t-2 border-l-2 border-[#707070]">
          <div className="flex grow">
            <div className="flex grow bg-black">
              {board && (
                <>
                  <span className="mt-[2px] ml-[1px] size-[5px] rounded-full bg-[#00ff00]" />
                  <Board />
                </>
              )}
            </div>
            <VScroll className="w-[23px]" before={vBefore} thumb={vThumb} />
          </div>
          <div className="flex h-[21px] shrink-0 items-center bg-[#f0f0f0] pr-[28px] pl-[3px]">
            <Arrow dir="left" />
            <span className={hBefore} />
            <span className={clsx('h-[19px] bg-[#cdcdcd]', hThumb)} />
            <span className={hAfter} />
            <Arrow dir="right" />
          </div>
        </div>
      </div>
      <Output {...output} />
    </main>
  )
}

function App() {
  return (
    <div lang="zh-CN" className="flex h-screen gap-1 overflow-hidden bg-[#98989c] font-['Open_Sans','Noto_Sans_CJK_SC',sans-serif] text-sm text-black">
      <div className="relative w-0 grow-[881] overflow-hidden">
        <AppWindow
          className="-ml-[68px]"
          title="C:\Users\...\DXF\PCB1_pads_1.pcb - PADS Layout"
          tools={MAIN_TOOLS}
          drafting
          vBefore="h-[272px]"
          vThumb="h-20"
          hBefore="grow-[327]"
          hThumb="w-[93px]"
          hAfter="grow-[267]"
          output={{
            title: '输出窗口',
            thumb: 'h-4',
            status: ['', '', 'W:12', 'G:25 25', '3950', '1250', '密尔'],
            log: (
              <>
                <div className="flex h-[5px] items-end overflow-hidden pl-10 leading-4">10.0.2</div>
                <p>PCB导入已开始  -- <Path>C:\Users\LBW\Desktop\PADS VX2.7版本零基础PCB Layout设计课程52讲素材\DXF\PCB1.PcbDoc</Path></p>
                <p>PCB导入已成功。导入的文件已保存  --  <LogLink>PCB1_pads_1.pcb</LogLink></p>
                <p>PCB导入日志文件已生成  -- <LogLink>C:\MentorGraphics\PADS Projects\PCB1_pads_1.log</LogLink></p>
                <p>PCB 文件已加载  -- <LogLink>C:\Users\LBW\Desktop\PADS VX2.7版本零基础PCB Layout设计课程52讲素材</LogLink></p>
              </>
            ),
          }}
        />
        <ColorDialog
          className="top-[126px] left-[62px]"
          selected={19}
          rows={LEFT_ROWS}
          hidden={['管脚编号', '网络名']}
          focused="管脚编号"
          others={['#000000', '#ffffff', '#ffff00', '#ff00ff', '#008080']}
          scroll={{ before: 'h-0', thumb: 'h-[188px]' }}
          markClass="left-[5px] top-[290px] h-[26px] w-[723px]"
        />
      </div>
      <div className="relative w-0 grow-[1035]">
        <AppWindow
          className="-mr-[2px]"
          title="C:\Users\...\PCB\default.pcb* - PADS Layout"
          tools={RIGHT_TOOLS}
          board
          vBefore="h-[294px]"
          vThumb="h-[52px]"
          hBefore="grow-[340]"
          hThumb="w-[70px]"
          hAfter="grow-[365]"
          output={{
            title: '输出窗口',
            thumb: 'h-[18px]',
            status: ['准备就绪', '', 'W:10', 'G:100 100', '14600', '19800', '密尔'],
            log: (
              <>
                <hr className="mt-2 mb-[47px] border-black" />
                <p>
                  PCB 文件已加载  -- <LogLink>C:\Users\LBW\Desktop\PADS VX2.7版本零基础PCB Layout设计课程52讲素材\PCB\default.pcb</LogLink>  -- 版本  10.0.2
                </p>
              </>
            ),
          }}
        />
        <ColorDialog
          className="top-[129px] left-[41px]"
          active
          selected={0}
          rows={RIGHT_ROWS}
          hidden={['管脚编号']}
          others={['#000000', '#ffffff', '#ffff00', '#c0c0c0', '#000000']}
          netsShown
          scroll={{ before: 'h-[129px]', thumb: 'h-[69px]' }}
          markClass="left-[8px] top-[332px] h-[23px] w-[709px]"
        />
      </div>
    </div>
  )
}

export default App
